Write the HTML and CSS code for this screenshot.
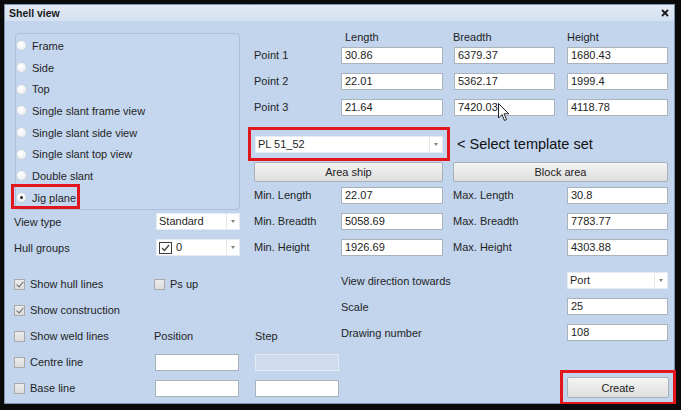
FILE: index.html
```html
<!DOCTYPE html>
<html lang="en">
<head>
    <meta charset="UTF-8">
    <meta name="viewport" content="width=device-width, initial-scale=1.0">
    <title>Shell view</title>
    <link rel="stylesheet" href="styles.css">
</head>
<body>
    <div class="window">
        <div class="titlebar">
            <span class="title">Shell view</span>
            <svg class="close" width="8" height="8" viewBox="0 0 8 8">
                <path d="M1 1 L7 7 M7 1 L1 7" stroke="#1a1a1a" stroke-width="1.8" fill="none"/>
            </svg>
        </div>

        <div class="content">
            <div class="top">
                <!-- view kind -->
                <div class="left-col">
                    <div class="group">
                        <div class="radio-row"><span class="radio"></span>Frame</div>
                        <div class="radio-row"><span class="radio"></span>Side</div>
                        <div class="radio-row"><span class="radio"></span>Top</div>
                        <div class="radio-row"><span class="radio"></span>Single slant frame view</div>
                        <div class="radio-row"><span class="radio"></span>Single slant side view</div>
                        <div class="radio-row"><span class="radio"></span>Single slant top view</div>
                        <div class="radio-row"><span class="radio"></span>Double slant</div>
                        <div class="radio-row marked"><span class="radio checked"></span>Jig plane</div>
                    </div>

                    <div class="field-row view-type">
                        <span>View type</span>
                        <div class="combo small">
                            <span class="combo-text">Standard</span>
                            <span class="combo-arrow"></span>
                        </div>
                    </div>
                    <div class="field-row hull">
                        <span>Hull groups</span>
                        <div class="combo small">
                            <span class="combo-text">
                                <svg class="combo-check" width="13" height="12" viewBox="0 0 13 12">
                                    <rect x="0.5" y="0.5" width="12" height="11" fill="#fff" stroke="#3c3c3c"/>
                                    <path d="M3 6 L5.5 8.5 L10 3" stroke="#3c3c3c" stroke-width="1.2" fill="none"/>
                                </svg>
                                0
                            </span>
                            <span class="combo-arrow"></span>
                        </div>
                    </div>
                </div>

                <!-- points and area -->
                <div class="right-grid">
                    <span class="hdr c2 indent">Length</span>
                    <span class="hdr c4">Breadth</span>
                    <span class="hdr c6">Height</span>

                    <span class="lbl c1">Point 1</span>
                    <div class="input c2">30.86</div>
                    <div class="input c4">6379.37</div>
                    <div class="input c6">1680.43</div>

                    <span class="lbl c1">Point 2</span>
                    <div class="input c2">22.01</div>
                    <div class="input c4">5362.17</div>
                    <div class="input c6">1999.4</div>

                    <span class="lbl c1">Point 3</span>
                    <div class="input c2">21.64</div>
                    <div class="input c4 has-cursor">7420.03
                        <svg class="cursor" width="12" height="19" viewBox="0 0 12 19">
                            <path d="M0.5 0.5 L0.5 15 L4 11.5 L6.5 17.5 L8.5 16.6 L6 10.8 L10.8 10.8 Z" fill="#fff" stroke="#222" stroke-width="1"/>
                        </svg>
                    </div>
                    <div class="input c6">4118.78</div>

                    <div class="combo template marked-box">
                        <span class="combo-text">PL 51_52</span>
                        <span class="combo-arrow"></span>
                    </div>
                    <span class="hint">&lt; Select template set</span>

                    <button class="btn area">Area ship</button>
                    <button class="btn block">Block area</button>

                    <span class="lbl c1">Min. Length</span>
                    <div class="input c2">22.07</div>
                    <span class="lbl c4">Max. Length</span>
                    <div class="input c6">30.8</div>

                    <span class="lbl c1">Min. Breadth</span>
                    <div class="input c2">5058.69</div>
                    <span class="lbl c4">Max. Breadth</span>
                    <div class="input c6">7783.77</div>

                    <span class="lbl c1">Min. Height</span>
                    <div class="input c2">1926.69</div>
                    <span class="lbl c4">Max. Height</span>
                    <div class="input c6">4303.88</div>
                </div>
            </div>

            <div class="bottom">
                <div class="options">
                    <div class="opt"><span class="check on"></span>Show hull lines</div>
                    <div class="opt"><span class="check"></span>Ps up</div>
                    <span></span>

                    <div class="opt"><span class="check on"></span>Show construction</div>
                    <span></span>
                    <span></span>

                    <div class="opt"><span class="check"></span>Show weld lines</div>
                    <span class="opt">Position</span>
                    <span class="opt">Step</span>

                    <div class="opt"><span class="check"></span>Centre line</div>
                    <div class="input pos"></div>
                    <div class="input step disabled"></div>

                    <div class="opt"><span class="check"></span>Base line</div>
                    <div class="input pos"></div>
                    <div class="input step"></div>
                </div>

                <div class="output">
                    <span class="lbl">View direction towards</span>
                    <div class="combo">
                        <span class="combo-text">Port</span>
                        <span class="combo-arrow"></span>
                    </div>

                    <span class="lbl">Scale</span>
                    <div class="input">25</div>

                    <span class="lbl">Drawing number</span>
                    <div class="input">108</div>

                    <button class="btn create marked-create">Create</button>
                </div>
            </div>
        </div>
    </div>
</body>
</html>
```

FILE: styles.css
```css
body {
    margin: 0;
    background: #0a0a0a;
    font-family: 'Liberation Sans', Arial, sans-serif;
    font-size: 11px;
    color: #1f1f1f;
}

.window {
    margin: 4px 0 0 4px;
    width: 671px;
    height: 400px;
    box-sizing: border-box;
    border: 1px solid #7d93b0;
    background: #c2d5ed;
}

.titlebar {
    height: 16px;
    display: flex;
    align-items: center;
    justify-content: space-between;
    padding: 0 5px 0 4px;
    background: linear-gradient(#e2eaf5, #d4e0ef);
}

.title {
    font-weight: bold;
    font-size: 10.5px;
    color: #1a1a1a;
}

.content {
    padding: 10px 6px 0 9px;
}

.top {
    display: flex;
    gap: 14px;
}

/* left column */

.left-col {
    width: 226px;
}

.group {
    margin: 2px 0 0 1px;
    height: 177px;
    box-sizing: border-box;
    border: 1px solid #aac0dc;
    border-radius: 4px;
    padding-top: 1px;
    background: #c5d7ee;
}

.radio-row {
    position: relative;
    display: flex;
    align-items: center;
    height: 21.7px;
}

.radio {
    width: 11px;
    height: 11px;
    box-sizing: border-box;
    border-radius: 50%;
    border: 1px solid #c9d3df;
    background: radial-gradient(circle at 40% 35%, #ffffff 0%, #f2f4f6 50%, #dfe4ea 100%);
    margin-right: 5px;
    position: relative;
}

.radio.checked::after {
    content: "";
    position: absolute;
    left: 3px;
    top: 3px;
    width: 3px;
    height: 3px;
    border-radius: 50%;
    background: #2a2a2a;
}

.marked::after {
    content: "";
    position: absolute;
    left: -5px;
    top: -3px;
    width: 69px;
    height: 25px;
    box-sizing: border-box;
    border: 3px solid #e3161d;
}

.field-row {
    display: flex;
    justify-content: space-between;
    align-items: center;
}

.view-type {
    margin-top: 3px;
}

.hull {
    margin-top: 9px;
}

.combo {
    position: relative;
    display: flex;
    height: 17px;
    box-sizing: border-box;
    background: #fff;
    border: 1px solid #e4ebf4;
}

.combo.small {
    width: 84px;
}

.combo-text {
    flex: 1;
    display: flex;
    align-items: center;
    padding-left: 2px;
    line-height: 15px;
}

.combo-check {
    margin-right: 4px;
}

.combo-arrow {
    width: 12px;
    border-left: 1px solid #e6e6e6;
    display: flex;
    align-items: center;
    justify-content: center;
}

.combo-arrow::after {
    content: "";
    width: 0;
    height: 0;
    border-top: 3px solid #808080;
    border-left: 2.5px solid transparent;
    border-right: 2.5px solid transparent;
}

/* right grid */

.right-grid {
    width: 414px;
    display: grid;
    grid-template-columns: 87px 102px 10px 102px 12px 101px;
    grid-template-rows: 16px 26px 26px 37px 26px 25px 26px 26px 17px;
    align-items: start;
}

.c1 { grid-column: 1; }
.c2 { grid-column: 2; }
.c4 { grid-column: 4; }
.c6 { grid-column: 6; }

.hdr {
    line-height: 13px;
}

.hdr.indent {
    padding-left: 4px;
}

.lbl {
    line-height: 17px;
}

.input {
    position: relative;
    height: 17px;
    box-sizing: border-box;
    background: #fff;
    border: 1px solid #a9b2bd;
    padding-left: 3px;
    line-height: 14px;
    color: #222;
}

.right-grid .input.c4 {
    margin-left: 1px;
}

.cursor {
    position: absolute;
    left: 43px;
    top: 3px;
}

.template {
    grid-column: 1 / 3;
    margin-left: 1px;
}

.marked-box::after {
    content: "";
    position: absolute;
    left: -8px;
    top: -10px;
    width: 202px;
    height: 34px;
    box-sizing: border-box;
    border: 3px solid #e3161d;
}

.hint {
    grid-column: 4 / 7;
    padding-left: 4px;
    font-size: 14.5px;
    line-height: 17px;
    color: #111;
}

.btn {
    position: relative;
    height: 20px;
    box-sizing: border-box;
    border: 1px solid #aab0b8;
    border-radius: 2px;
    background: linear-gradient(#f4f4f4, #dedede);
    font-family: inherit;
    font-size: 11px;
    color: #222;
    padding: 0;
}

.area {
    grid-column: 1 / 3;
}

.block {
    grid-column: 4 / 7;
}

/* bottom */

.bottom {
    display: flex;
    margin-top: 15px;
}

.options {
    width: 326px;
    display: grid;
    grid-template-columns: 140px 101px 85px;
    grid-template-rows: repeat(5, 26px);
    align-items: center;
}

.opt {
    display: flex;
    align-items: center;
}

.check {
    position: relative;
    width: 11px;
    height: 11px;
    box-sizing: border-box;
    border: 1px solid #a9a9a9;
    background: linear-gradient(#ececec, #dcdcdc);
    margin-right: 5px;
}

.check.on::after {
    content: "";
    position: absolute;
    left: 3px;
    top: 0px;
    width: 3px;
    height: 6px;
    border-right: 1.5px solid #6a6a6a;
    border-bottom: 1.5px solid #6a6a6a;
    transform: rotate(40deg);
}

.options .input {
    width: 84px;
}

.options .pos {
    margin-left: 1px;
}

.input.disabled {
    background: #cfdcee;
    border-color: #e2eaf4;
}

.output {
    width: 327px;
    margin: 1px 0 0 1px;
    display: grid;
    grid-template-columns: 226px 101px;
    grid-template-rows: repeat(3, 26px);
    align-items: start;
}

.output .lbl {
    line-height: 19px;
}

.create {
    grid-column: 2;
    width: 102px;
    height: 21px;
    margin-top: 27px;
}

.marked-create::after {
    content: "";
    position: absolute;
    left: -8px;
    top: -8px;
    width: 116px;
    height: 35px;
    box-sizing: border-box;
    border: 3px solid #e3161d;
}
```
